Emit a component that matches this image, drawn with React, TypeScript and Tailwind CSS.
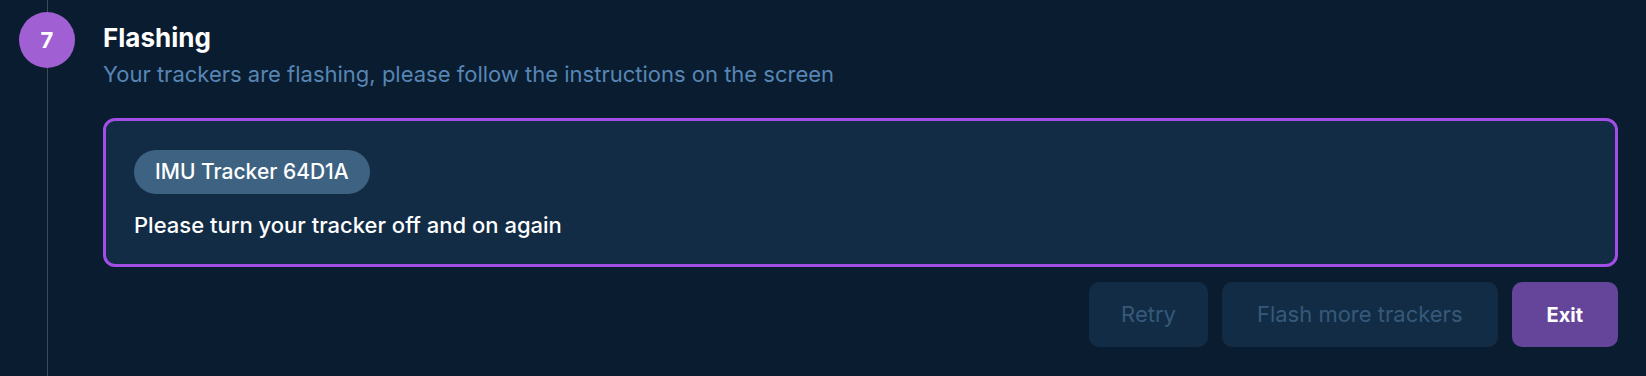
export default function App() {
  return (
    <div
      className="flex min-h-[376px] w-full bg-[#0a1c30] pl-[19px] text-white"
      style={{ fontFamily: "Inter, 'Noto Sans', sans-serif" }}
    >
      {/* step rail */}
      <div className="flex w-[56px] shrink-0 flex-col items-center">
        <div className="h-[12px] w-px bg-[#3f4a58]" />
        <div className="grid size-[56px] place-items-center rounded-full bg-[#a15fd4] text-[22px] font-bold">7</div>
        <div className="w-px flex-1 bg-[#3f4a58]" />
      </div>

      <div className="ml-[28px] flex flex-1 flex-col pr-[28px]">
        <h2 className="mt-[22px] text-[26px] leading-[32px] font-bold">Flashing</h2>
        <p className="mt-[5px] text-[22px] leading-[30px] text-[#5786b5]">
          Your trackers are flashing, please follow the instructions on the screen
        </p>

        <div className="mt-[29px] flex flex-col items-start rounded-xl border-[3px] border-[#a24ee6] bg-[#122c45] px-[28px] pt-[29px] pb-[24px]">
          <span className="flex h-[44px] items-center rounded-full bg-[#3e6382] px-[21px] text-[21px] font-medium">
            IMU Tracker 64D1A
          </span>
          <p className="mt-[16px] text-[22px] leading-[30px] font-medium">Please turn your tracker off and on again</p>
        </div>

        <div className="mt-[15px] flex justify-end gap-[14px]">
          <button className="h-[65px] rounded-[10px] bg-[#122c45] px-[32px] text-[22px] text-[#36597a]">Retry</button>
          <button className="h-[65px] rounded-[10px] bg-[#122c45] px-[35px] text-[22px] text-[#36597a]">
            Flash more trackers
          </button>
          <button className="h-[65px] rounded-[10px] bg-[#65459a] px-[35px] text-[20px] font-bold">Exit</button>
        </div>
      </div>
    </div>
  );
}
